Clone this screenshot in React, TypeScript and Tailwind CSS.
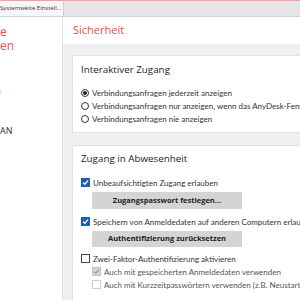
import React from "react"

function Radio({ checked, label }: { checked?: boolean; label: string }) {
  return (
    <div className="flex h-[13px] items-center gap-[3px] whitespace-nowrap">
      <span className="flex h-[8px] w-[8px] shrink-0 items-center justify-center rounded-full border border-[#333] bg-white">
        {checked && <span className="h-[4px] w-[4px] rounded-full bg-[#222]" />}
      </span>
      <span>{label}</span>
    </div>
  )
}

type BoxState = "on" | "off" | "dim-on" | "dim-off"

function Check({ state, label, indent }: { state: BoxState; label: string; indent?: boolean }) {
  const box =
    state === "on"
      ? "border-[#1a5fb4] bg-[#1a5fb4]"
      : state === "off"
        ? "border-[#444] bg-white"
        : state === "dim-on"
          ? "border-[#c2c2c2] bg-[#d6d6d6]"
          : "border-[#cfcfcf] bg-white"
  const stroke = state === "on" ? "#fff" : "#9a9a9a"
  return (
    <div className={`flex h-[13px] items-center gap-[3px] whitespace-nowrap ${indent ? "pl-[11px]" : ""}`}>
      <span className={`flex h-[9px] w-[9px] shrink-0 items-center justify-center border ${box}`}>
        {(state === "on" || state === "dim-on") && (
          <svg width="7" height="7" viewBox="0 0 7 7">
            <path d="M1 3.6 L2.8 5.3 L6 1.6" fill="none" stroke={stroke} strokeWidth="1.3" />
          </svg>
        )}
      </span>
      <span className={state.startsWith("dim") ? "text-[#555]" : ""}>{label}</span>
    </div>
  )
}

function Btn({ label }: { label: string }) {
  return (
    <div className="ml-[11px] flex w-[150px] items-center justify-center whitespace-nowrap bg-[#d4d4d4] font-['Open_Sans',sans-serif] text-[7.5px] font-bold text-[#222]">
      {label}
    </div>
  )
}

export default function App() {
  return (
    <div className="flex h-[300px] w-[300px] flex-col overflow-hidden bg-[#f0f0f0] font-['Open_Sans',sans-serif] text-[#333]">
      {/* tabs */}
      <div className="flex h-[17px] shrink-0 border-t border-b border-t-[#e8a3a3] border-b-[#d2d2d2] bg-[#e6e6e6]">
        <div className="flex w-[64px] items-center overflow-hidden whitespace-nowrap border-r border-[#cdcdcd] bg-[#f6f6f6] text-[6px] text-[#333]">
          Systemweite Einstell...
        </div>
      </div>
      <div className="flex flex-1">
        {/* sidebar */}
        <div className="flex w-[63px] shrink-0 flex-col overflow-hidden border-r border-[#e2e2e2] bg-white text-[12px] leading-[14px] text-[#e4524a]">
          <div className="mt-[8px]">e</div>
          <div>en</div>
          <div className="mt-[32px] -ml-[7px] text-[9px] leading-[12px] text-[#2a8a8a]">in</div>
          <div className="mt-[28px] text-[9px] leading-[12px] text-[#333]">AN</div>
        </div>
        {/* main */}
        <div className="flex flex-1 flex-col overflow-hidden">
          <div className="flex h-[27px] shrink-0 items-center bg-white pl-[10px] text-[11px] text-[#e4524a]">
            Sicherheit
          </div>
          <div className="flex flex-col pl-[9px] pt-[11px] font-['Lato',sans-serif] text-[8px]">
            <div className="flex w-[260px] flex-col border border-[#e2e2e2] bg-white pl-[8px] pt-[6px] pb-[7px]">
              <div className="h-[16px] font-['Open_Sans',sans-serif] text-[9.8px] leading-[16px] text-[#222]">Interaktiver Zugang</div>
              <div className="mt-[8px]">
                <Radio checked label="Verbindungsanfragen jederzeit anzeigen" />
                <Radio label="Verbindungsanfragen nur anzeigen, wenn das AnyDesk-Fenster geöffnet ist" />
                <Radio label="Verbindungsanfragen nie anzeigen" />
              </div>
            </div>
            <div className="mt-[12px] flex w-[260px] flex-col border border-[#e2e2e2] bg-white pl-[8px] pt-[5px] pb-[10px]">
              <div className="h-[16px] font-['Open_Sans',sans-serif] text-[9.8px] leading-[16px] text-[#222]">Zugang in Abwesenheit</div>
              <div className="mt-[9px]">
                <Check state="on" label="Unbeaufsichtigten Zugang erlauben" />
              </div>
              <div className="mt-[3px] flex h-[17px]">
                <Btn label="Zugangspasswort festlegen..." />
              </div>
              <div className="mt-[6px]">
                <Check state="on" label="Speichern von Anmeldedaten auf anderen Computern erlauben" />
              </div>
              <div className="mt-[3px] flex h-[16px]">
                <Btn label="Authentifizierung zurücksetzen" />
              </div>
              <div className="mt-[5px]">
                <Check state="off" label="Zwei-Faktor-Authentifizierung aktivieren" />
                <Check state="dim-on" indent label="Auch mit gespeicherten Anmeldedaten verwenden" />
                <Check state="dim-off" indent label="Auch mit Kurzzeitpasswörtern verwenden (z.B. Neustart)" />
              </div>
            </div>
          </div>
        </div>
      </div>
    </div>
  )
}
